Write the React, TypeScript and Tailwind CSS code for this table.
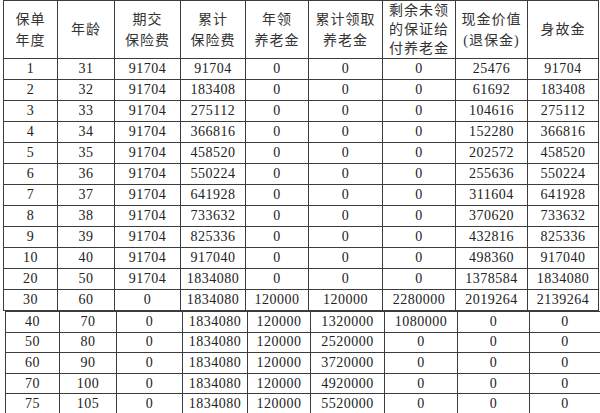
const COLS = [54, 57, 66, 65, 63, 74, 73, 72, 71];

const HEAD: string[][] = [
  ["保单", "年度"],
  ["年龄"],
  ["期交", "保险费"],
  ["累计", "保险费"],
  ["年领", "养老金"],
  ["累计领取", "养老金"],
  ["剩余未领", "的保证给", "付养老金"],
  ["现金价值", "(退保金)"],
  ["身故金"],
];

const TOP: string[][] = [
  ["1", "31", "91704", "91704", "0", "0", "0", "25476", "91704"],
  ["2", "32", "91704", "183408", "0", "0", "0", "61692", "183408"],
  ["3", "33", "91704", "275112", "0", "0", "0", "104616", "275112"],
  ["4", "34", "91704", "366816", "0", "0", "0", "152280", "366816"],
  ["5", "35", "91704", "458520", "0", "0", "0", "202572", "458520"],
  ["6", "36", "91704", "550224", "0", "0", "0", "255636", "550224"],
  ["7", "37", "91704", "641928", "0", "0", "0", "311604", "641928"],
  ["8", "38", "91704", "733632", "0", "0", "0", "370620", "733632"],
  ["9", "39", "91704", "825336", "0", "0", "0", "432816", "825336"],
  ["10", "40", "91704", "917040", "0", "0", "0", "498360", "917040"],
  ["20", "50", "91704", "1834080", "0", "0", "0", "1378584", "1834080"],
  ["30", "60", "0", "1834080", "120000", "120000", "2280000", "2019264", "2139264"],
];

const BOTTOM: string[][] = [
  ["40", "70", "0", "1834080", "120000", "1320000", "1080000", "0", "0"],
  ["50", "80", "0", "1834080", "120000", "2520000", "0", "0", "0"],
  ["60", "90", "0", "1834080", "120000", "3720000", "0", "0", "0"],
  ["70", "100", "0", "1834080", "120000", "4920000", "0", "0", "0"],
  ["75", "105", "0", "1834080", "120000", "5520000", "0", "0", "0"],
];

const FONT = "font-['Liberation_Serif','Noto_Sans_CJK_SC',serif]";

function Cols() {
  return (
    <colgroup>
      {COLS.map((w, i) => (
        <col key={i} style={{ width: w }} />
      ))}
    </colgroup>
  );
}

function Rows({ rows, h }: { rows: string[][]; h: string }) {
  return (
    <>
      {rows.map((r, i) => (
        <tr key={i} className={h}>
          {r.map((v, j) => (
            <td key={j} className="border border-[#3c3c3c] p-0 text-center align-middle leading-none tracking-[0.5px]">
              {v}
            </td>
          ))}
        </tr>
      ))}
    </>
  );
}

export default function App() {
  return (
    <div className={`h-[413px] w-[600px] overflow-hidden bg-white text-[14px] text-[#222] ${FONT}`}>
      <table className="ml-[3px] w-[595px] table-fixed border-collapse">
        <Cols />
        <tbody>
          <tr className="h-[58px]">
            {HEAD.map((lines, i) => (
              <td
                key={i}
                className={`border border-[#3c3c3c] p-0 text-center align-middle text-[14px] tracking-[1px] text-[#333] ${lines.length > 2 ? "leading-[19px]" : "leading-[21px]"}`}
              >
                {lines.map((l, k) => (
                  <div key={k}>{l}</div>
                ))}
              </td>
            ))}
          </tr>
          <Rows rows={TOP} h="h-[21px]" />
        </tbody>
      </table>
      <table className="ml-[5px] w-[592px] table-fixed border-collapse">
        <Cols />
        <tbody>
          <Rows rows={BOTTOM} h="h-[20.6px]" />
        </tbody>
      </table>
    </div>
  );
}
